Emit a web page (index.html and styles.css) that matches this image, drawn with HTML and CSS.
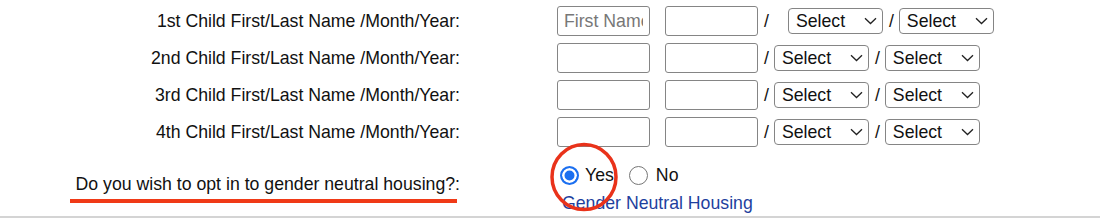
FILE: index.html
```html
<!DOCTYPE html>
<html lang="en">
<head>
    <meta charset="UTF-8">
    <title>Housing Application</title>
    <link rel="stylesheet" href="styles.css">
</head>
<body>
    <div class="form">
        <div class="row">
            <label class="lbl">1st Child First/Last Name /Month/Year:</label>
            <div class="fields">
                <input class="txt" type="text" placeholder="First Name">
                <input class="txt txt-last" type="text">
                <span class="slash slash-wide">/</span>
                <span class="sel-wrap">
                    <select class="sel"><option>Select</option></select>
                    <svg class="chev" width="13" height="8" viewBox="0 0 13 8"><path d="M1 1.2 L6.5 6.5 L12 1.2" fill="none" stroke="#222" stroke-width="1.3"/></svg>
                </span>
                <span class="slash">/</span>
                <span class="sel-wrap">
                    <select class="sel"><option>Select</option></select>
                    <svg class="chev" width="13" height="8" viewBox="0 0 13 8"><path d="M1 1.2 L6.5 6.5 L12 1.2" fill="none" stroke="#222" stroke-width="1.3"/></svg>
                </span>
            </div>
        </div>
        <div class="row">
            <label class="lbl">2nd Child First/Last Name /Month/Year:</label>
            <div class="fields">
                <input class="txt" type="text">
                <input class="txt txt-last" type="text">
                <span class="slash">/</span>
                <span class="sel-wrap">
                    <select class="sel"><option>Select</option></select>
                    <svg class="chev" width="13" height="8" viewBox="0 0 13 8"><path d="M1 1.2 L6.5 6.5 L12 1.2" fill="none" stroke="#222" stroke-width="1.3"/></svg>
                </span>
                <span class="slash">/</span>
                <span class="sel-wrap">
                    <select class="sel"><option>Select</option></select>
                    <svg class="chev" width="13" height="8" viewBox="0 0 13 8"><path d="M1 1.2 L6.5 6.5 L12 1.2" fill="none" stroke="#222" stroke-width="1.3"/></svg>
                </span>
            </div>
        </div>
        <div class="row">
            <label class="lbl">3rd Child First/Last Name /Month/Year:</label>
            <div class="fields">
                <input class="txt" type="text">
                <input class="txt txt-last" type="text">
                <span class="slash">/</span>
                <span class="sel-wrap">
                    <select class="sel"><option>Select</option></select>
                    <svg class="chev" width="13" height="8" viewBox="0 0 13 8"><path d="M1 1.2 L6.5 6.5 L12 1.2" fill="none" stroke="#222" stroke-width="1.3"/></svg>
                </span>
                <span class="slash">/</span>
                <span class="sel-wrap">
                    <select class="sel"><option>Select</option></select>
                    <svg class="chev" width="13" height="8" viewBox="0 0 13 8"><path d="M1 1.2 L6.5 6.5 L12 1.2" fill="none" stroke="#222" stroke-width="1.3"/></svg>
                </span>
            </div>
        </div>
        <div class="row">
            <label class="lbl">4th Child First/Last Name /Month/Year:</label>
            <div class="fields">
                <input class="txt" type="text">
                <input class="txt txt-last" type="text">
                <span class="slash">/</span>
                <span class="sel-wrap">
                    <select class="sel"><option>Select</option></select>
                    <svg class="chev" width="13" height="8" viewBox="0 0 13 8"><path d="M1 1.2 L6.5 6.5 L12 1.2" fill="none" stroke="#222" stroke-width="1.3"/></svg>
                </span>
                <span class="slash">/</span>
                <span class="sel-wrap">
                    <select class="sel"><option>Select</option></select>
                    <svg class="chev" width="13" height="8" viewBox="0 0 13 8"><path d="M1 1.2 L6.5 6.5 L12 1.2" fill="none" stroke="#222" stroke-width="1.3"/></svg>
                </span>
            </div>
        </div>
        <div class="row row-gnh">
            <label class="lbl lbl-gnh">Do you wish to opt in to gender neutral housing?:</label>
            <div class="gnh">
                <div class="radios">
                    <input class="rad" type="radio" name="gnh" id="gnhYes" checked>
                    <label class="rad-lbl" for="gnhYes">Yes</label>
                    <input class="rad" type="radio" name="gnh" id="gnhNo">
                    <label class="rad-lbl" for="gnhNo">No</label>
                </div>
                <a class="gnh-link" href="#">Gender Neutral Housing</a>
            </div>
        </div>

        <!-- annotation marks -->
        <div class="mark-line"></div>
        <svg class="mark-circle" width="72" height="72" viewBox="0 0 72 72">
            <ellipse cx="36" cy="36" rx="32" ry="32.5" fill="none" stroke="#e9321a" stroke-width="3.5"/>
        </svg>
    </div>
</body>
</html>
```

FILE: styles.css
```css
body {
    margin: 0;
    font-family: "Liberation Sans", Arial, sans-serif;
    font-size: 17.7px;
    color: #111;
    background: #fff;
}
.form {
    position: relative;
    padding-top: 6px;
    border-bottom: 2px solid #d4d4d4;
    height: 210px;
}
.row {
    display: grid;
    grid-template-columns: 460px 1fr;
    column-gap: 97px;
    align-items: center;
    margin-bottom: 7px;
}
.lbl {
    text-align: right;
}
.fields {
    display: flex;
    align-items: center;
}
.txt {
    box-sizing: border-box;
    width: 93px;
    height: 30px;
    border: 1px solid #858585;
    border-radius: 3px;
    padding: 0 6px;
    font-family: inherit;
    font-size: 17.7px;
    color: #111;
}
.txt::placeholder {
    color: #777;
}
.txt-last {
    margin-left: 15px;
}
.slash {
    margin: 0 5px 0 6px;
}
.slash-wide {
    margin-right: 19px;
}
.sel-wrap {
    position: relative;
    display: inline-block;
    height: 26px;
}
.sel {
    -webkit-appearance: none;
    appearance: none;
    box-sizing: border-box;
    width: 95px;
    height: 26px;
    border: 1px solid #858585;
    border-radius: 4px;
    padding: 0 0 0 7px;
    background: #fff;
    font-family: inherit;
    font-size: 17.7px;
    color: #111;
}
.chev {
    position: absolute;
    right: 6px;
    top: 9px;
    pointer-events: none;
}
.row-gnh {
    margin-top: 13px;
    margin-bottom: 0;
}
.lbl-gnh {
    margin-bottom: 4px;
}
.gnh {
    display: flex;
    flex-direction: column;
}
.radios {
    display: flex;
    align-items: center;
    height: 30px;
}
.rad {
    -webkit-appearance: none;
    appearance: none;
    box-sizing: border-box;
    width: 19px;
    height: 19px;
    margin: 0 6px 0 3px;
    border: 1.5px solid #767676;
    border-radius: 50%;
    background: #fff;
}
.rad:checked {
    border: 2px solid #1b6ff0;
    background: #1b6ff0;
    box-shadow: inset 0 0 0 2.5px #fff;
}
.rad-lbl {
    margin-right: 12px;
}
.rad-lbl + .rad {
    margin-right: 8px;
}
.gnh-link {
    margin-top: 4px;
    margin-left: 5px;
    color: #1e3f9e;
    text-decoration: none;
    line-height: 18px;
}
.mark-line {
    position: absolute;
    left: 70px;
    top: 199px;
    width: 387px;
    height: 4px;
    background: #f03a17;
}
.mark-circle {
    position: absolute;
    left: 548px;
    top: 141px;
}
```
